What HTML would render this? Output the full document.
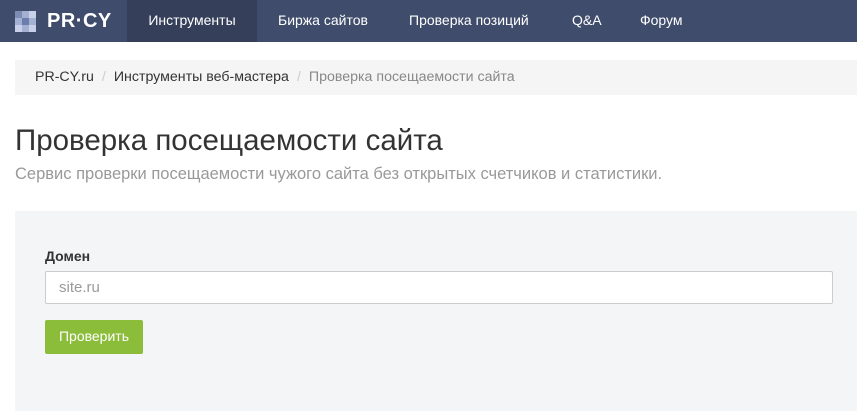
<!DOCTYPE html>
<html><head><meta charset="utf-8"><style>
*{box-sizing:border-box;margin:0;padding:0}
body{width:857px;height:411px;overflow:hidden;background:#fff;font-family:"Liberation Sans",sans-serif;color:#333}
.nav{height:42px;background:#3f4c6b;position:relative}
.logo{position:absolute;left:15px;top:10px;display:flex;align-items:center}
.grid{display:grid;grid-template-columns:repeat(3,7px);grid-template-rows:repeat(3,7px)}
.ltxt{color:#fff;font-weight:bold;font-size:20px;margin-left:11px;letter-spacing:0.5px}
.item{position:absolute;top:0;height:42px;line-height:40px;color:#fff;font-size:14px}
.bc{position:absolute;left:15px;top:60px;width:842px;height:35px;background:#f5f5f5;font-size:14.2px;line-height:34px;padding-left:20px;color:#333}
.bc .s{color:#ccc;margin:0 8px}
.bc .g{color:#888}
h1{position:absolute;left:15px;top:124px;font-size:29.5px;font-weight:normal;color:#333}
.sub{position:absolute;left:15px;top:165px;font-size:16.5px;color:#999}
.panel{position:absolute;left:15px;top:211px;width:842px;height:200px;background:#f4f5f7}
.lbl{position:absolute;left:30px;top:37px;font-size:14px;font-weight:bold;color:#333}
.inp{position:absolute;left:30px;top:60px;width:788px;height:33px;background:#fff;border:1px solid #ccc;border-radius:2px;font-size:15px;color:#999;line-height:31px;padding-left:13px}
.btn{position:absolute;left:30px;top:109px;width:98px;height:34px;background:#8bbd3b;border-radius:2px;color:#fff;font-size:14px;line-height:33px;text-align:center}
</style></head><body>
<div class="nav">
<div class="logo"><div class="grid">
<i style="background:#7d8cb5"></i><i style="background:#a3b0d2"></i><i style="background:#c7d0e8"></i>
<i style="background:#a3b0d2"></i><i style="background:#6b7cae"></i><i style="background:#a3b0d2"></i>
<i style="background:#c7d0e8"></i><i style="background:#a3b0d2"></i><i style="background:#c7d0e8"></i>
</div><span class="ltxt">PR·CY</span></div>
<div class="item" style="left:127px;width:130px;background:#353f5a;text-align:center">Инструменты</div>
<div class="item" style="left:278px">Биржа сайтов</div>
<div class="item" style="left:409px">Проверка позиций</div>
<div class="item" style="left:572px">Q&amp;A</div>
<div class="item" style="left:640px">Форум</div>
</div>
<div class="bc">PR-CY.ru<span class="s">/</span>Инструменты веб-мастера<span class="s">/</span><span class="g">Проверка посещаемости сайта</span></div>
<h1>Проверка посещаемости сайта</h1>
<div class="sub">Сервис проверки посещаемости чужого сайта без открытых счетчиков и статистики.</div>
<div class="panel">
<div class="lbl">Домен</div>
<div class="inp">site.ru</div>
<div class="btn">Проверить</div>
</div>
</body></html>
